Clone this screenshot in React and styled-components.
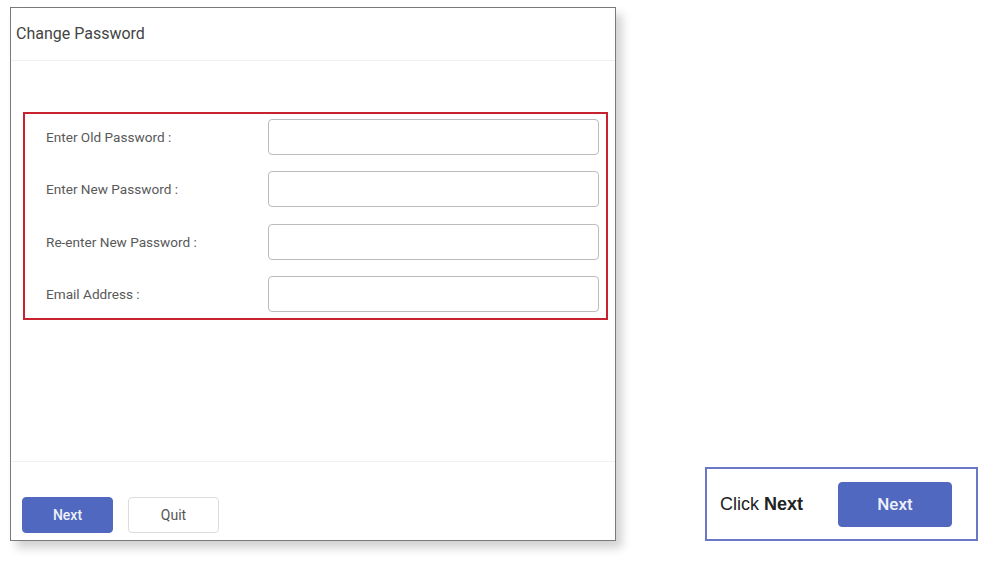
import React from 'react';
import styled, { createGlobalStyle } from 'styled-components';

const GlobalStyle = createGlobalStyle`
  html, body {
    margin: 0;
    padding: 0;
    background: #fff;
  }
  body {
    font-family: Roboto, "Liberation Sans", Arial, sans-serif;
  }
`;

const Page = styled.div`
  width: 996px;
  height: 567px;
  display: flex;
  align-items: flex-start;
  padding: 7px 0 0 10px;
  box-sizing: border-box;
`;

const Dialog = styled.div`
  width: 606px;
  height: 534px;
  box-sizing: border-box;
  border: 1px solid #7a7a7a;
  background: #fff;
  box-shadow: 6px 7px 9px rgba(0, 0, 0, 0.18);
  display: flex;
  flex-direction: column;
`;

const Header = styled.div`
  height: 53px;
  display: flex;
  align-items: center;
  padding-left: 5px;
  padding-bottom: 1px;
  box-sizing: border-box;
  border-bottom: 1px solid #f0f0f0;
  font-size: 16px;
  color: #444;
`;

const Body = styled.div`
  flex: 1;
  padding: 51px 7px 0 12px;
  border-bottom: 1px solid #f2f2f2;
`;

const Highlight = styled.div`
  border: 2px solid #c8212f;
  padding: 5px 6px 6px 21px;
  display: flex;
  flex-direction: column;
  gap: 16.3px;
`;

const Row = styled.div`
  display: flex;
  align-items: center;
`;

const Label = styled.label`
  width: 222px;
  font-size: 13.6px;
  color: #595959;
`;

const Input = styled.input`
  width: 331px;
  height: 36px;
  box-sizing: border-box;
  border: 1px solid #bcbcbc;
  border-radius: 4px;
  background: #fff;
  outline: none;
`;

const Footer = styled.div`
  height: 78px;
  display: flex;
  gap: 15px;
  padding: 35px 0 0 11px;
  box-sizing: border-box;
`;

const Button = styled.button`
  width: ${(p) => p.$w || 91}px;
  height: ${(p) => p.$h || 36}px;
  box-sizing: border-box;
  border-radius: 4px;
  font-family: Roboto, "Liberation Sans", Arial, sans-serif;
  font-size: ${(p) => p.$size || 14}px;
  cursor: pointer;
  border: 1px solid ${(p) => (p.$primary ? '#5068bf' : '#dcdcdc')};
  background: ${(p) => (p.$primary ? '#5068bf' : '#fff')};
  color: ${(p) => (p.$primary ? '#eef1fa' : '#555')};
  font-weight: ${(p) => (p.$primary ? 500 : 400)};
`;

const Callout = styled.div`
  margin-left: 89px;
  margin-top: 460px;
  width: 273px;
  height: 74px;
  box-sizing: border-box;
  border: 2px solid #6a77c4;
  display: flex;
  align-items: center;
  padding-left: 13px;
  gap: 35px;
  font-family: "Liberation Sans", Arial, sans-serif;
  font-size: 18px;
  color: #222;

  b {
    font-weight: 700;
  }
`;

const fields = [
  'Enter Old Password',
  'Enter New Password',
  'Re-enter New Password',
  'Email Address',
];

export default function App() {
  return (
    <>
      <GlobalStyle />
      <Page>
        <Dialog>
          <Header>Change Password</Header>
          <Body>
            <Highlight>
              {fields.map((f) => (
                <Row key={f}>
                  <Label>{f} :</Label>
                  <Input type={f === 'Email Address' ? 'email' : 'password'} />
                </Row>
              ))}
            </Highlight>
          </Body>
          <Footer>
            <Button $primary>Next</Button>
            <Button>Quit</Button>
          </Footer>
        </Dialog>
        <Callout>
          <span>
            Click <b>Next</b>
          </span>
          <Button $primary $w={114} $h={45} $size={17}>
            Next
          </Button>
        </Callout>
      </Page>
    </>
  );
}
